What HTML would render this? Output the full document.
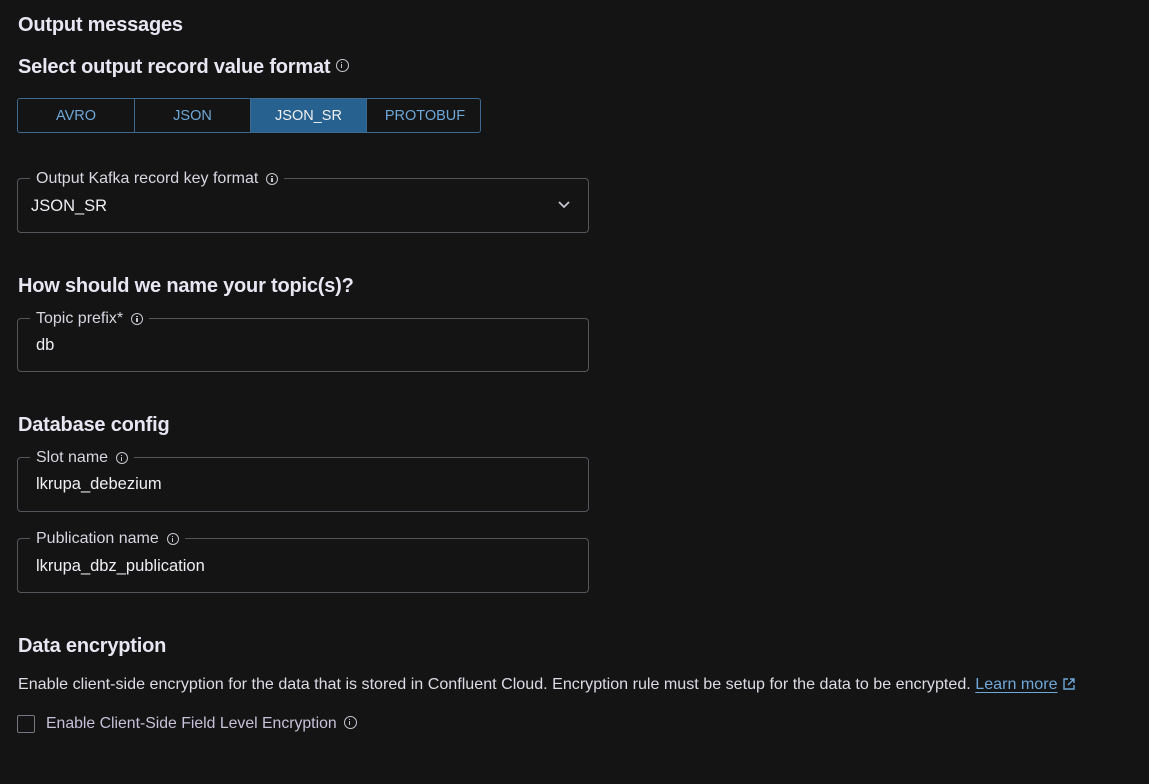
<!DOCTYPE html>
<html><head><style>
body{margin:0;width:1149px;height:784px;background:#141414;font-family:"Liberation Sans",sans-serif;color:#e6e4ee;position:relative;overflow:hidden}
.a{position:absolute;white-space:nowrap}
h{position:absolute;font-size:20px;font-weight:bold;color:#e8e6f2;white-space:nowrap;letter-spacing:-0.2px}
.seg{position:absolute;left:17px;top:98px;width:462px;height:33px;border:1px solid #3f6a90;border-radius:3px;display:flex;overflow:hidden}
.seg div{flex:0 0 auto;display:flex;align-items:center;justify-content:center;color:#6ea7d8;font-size:14.5px;border-right:1px solid #3f6a90}
.seg div:last-child{border-right:none}
.seg .on{background:#27618f;color:#f0f0f0}
.f{position:absolute;left:17px;width:570px;border:1px solid #55555c;border-radius:4px}
.f .l{position:absolute;left:12px;top:-9px;background:#141414;padding:0 6px;font-size:16px;line-height:18px;color:#d8d6e0;display:flex;align-items:center;gap:8px}
.f .v{position:absolute;left:18px;font-size:16.5px;color:#eeeef4}
.i{display:inline-block;width:12px;height:12px;border:1.3px solid #c8c6d0;border-radius:50%;position:relative;box-sizing:border-box}
.i:after{content:"";position:absolute;left:4px;top:4px;width:1.4px;height:4px;background:#c8c6d0}
.i:before{content:"";position:absolute;left:4px;top:1.8px;width:1.4px;height:1.3px;background:#c8c6d0}
</style></head><body>
<h style="left:18px;top:14px">Output messages</h>
<h style="left:18px;top:56px">Select output record value format <span class="i" style="width:13px;height:13px;vertical-align:1px"></span></h>
<div class="seg"><div style="width:116px">AVRO</div><div style="width:115px">JSON</div><div class="on" style="width:115px">JSON_SR</div><div style="width:116px">PROTOBUF</div></div>
<div class="f" style="top:178px;height:53px"><div class="l">Output Kafka record key format <span class="i"></span></div><div class="v" style="left:13px;top:18px">JSON_SR</div>
<svg class="a" style="left:539px;top:21px" width="14" height="10" viewBox="0 0 14 10"><path d="M2 2l5 5 5-5" stroke="#c8c6d0" stroke-width="1.8" fill="none"/></svg></div>
<h style="left:18px;top:275px">How should we name your topic(s)?</h>
<div class="f" style="top:318px;height:52px"><div class="l">Topic prefix* <span class="i"></span></div><div class="v" style="top:17px">db</div></div>
<h style="left:18px;top:414px">Database config</h>
<div class="f" style="top:457px;height:53px"><div class="l">Slot name <span class="i"></span></div><div class="v" style="top:17px">lkrupa_debezium</div></div>
<div class="f" style="top:538px;height:53px"><div class="l">Publication name <span class="i"></span></div><div class="v" style="top:18px">lkrupa_dbz_publication</div></div>
<h style="left:18px;top:635px">Data encryption</h>
<div class="a" style="left:18px;top:675px;font-size:16.1px;color:#dddbe4">Enable client-side encryption for the data that is stored in Confluent Cloud. Encryption rule must be setup for the data to be encrypted. <span style="color:#6ea7d8;text-decoration:underline;text-underline-offset:3px">Learn more</span> <svg width="14" height="14" viewBox="0 0 14 14" style="vertical-align:-2px"><path d="M6 2H2v10h10V8M8 2h4v4M12 2L6 8" stroke="#6ea7d8" stroke-width="1.4" fill="none"/></svg></div>
<div class="a" style="left:17px;top:715px;width:18px;height:18px;border:1px solid #77767e;border-radius:2px;box-sizing:border-box"></div>
<div class="a" style="left:46px;top:715px;font-size:15.8px;color:#c8c0d8">Enable Client-Side Field Level Encryption <span class="i" style="width:13px;height:13px;vertical-align:-1px;margin-left:3px"></span></div>
</body></html>
